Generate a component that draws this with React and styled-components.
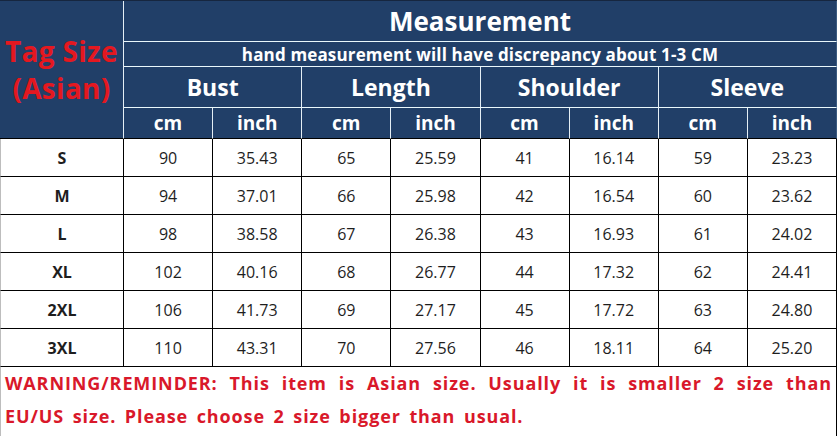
import React from "react";
import styled, { createGlobalStyle } from "styled-components";

const Global = createGlobalStyle`
  * { box-sizing: border-box; }
  html, body { margin: 0; padding: 0; background: #ffffff; }
  body { font-family: "Open Sans", "Noto Sans", "Liberation Sans", sans-serif; }
`;

const NAVY = "#213f68";
const RED = "#d9182a";

const Sheet = styled.div`
  width: 837px;
  height: 436px;
  display: grid;
  grid-template-columns: 124px repeat(8, 1fr);
  grid-template-rows: 41px 25px 41px 31px repeat(6, 38px) 70px;
  border-top: 1px solid #16263f;
`;

const Head = styled.div`
  background: ${NAVY};
  color: #ffffff;
  display: flex;
  align-items: center;
  justify-content: center;
  font-weight: ${(p) => p.$weight || 700};
  font-size: ${(p) => p.$size || 20}px;
  border-right: 1px solid ${(p) => (p.$last ? "#3a5a80" : "#e4eef5")};
  border-bottom: 1px solid ${(p) => (p.$bottom ? "#000" : "#eaf8fc")};
  grid-column: ${(p) => p.$col || "auto"};
  grid-row: ${(p) => p.$row || "auto"};
  white-space: nowrap;
  letter-spacing: ${(p) => p.$ls || 0}px;
  line-height: 1;
`;

const TagCell = styled(Head)`
  flex-direction: column;
  color: #e41820;
  font-size: 28px;
  line-height: 37px;
  padding-top: 0;
  letter-spacing: 0.3px;
`;

const Cell = styled.div`
  display: flex;
  align-items: center;
  justify-content: center;
  font-size: 16px;
  font-weight: ${(p) => (p.$bold ? 700 : 400)};
  color: #1e1e1e;
  border-right: 1px solid #000;
  border-bottom: 1px solid #000;
  border-left: ${(p) => (p.$first ? "1px solid #bdbdbd" : "none")};
  padding-top: 1px;
`;

const Warning = styled.div`
  grid-column: 1 / -1;
  border-right: 1px solid #000;
  border-bottom: 1px solid #000;
  border-left: 1px solid #bdbdbd;
  color: ${RED};
  font-weight: 700;
  font-size: 18px;
  letter-spacing: 0.9px;
  word-spacing: 3px;
  line-height: 33px;
  padding: 0 4px 0 4px;
  text-align: justify;
  text-align-last: left;
`;

const rows = [
  ["S", 90, "35.43", 65, "25.59", 41, "16.14", 59, "23.23"],
  ["M", 94, "37.01", 66, "25.98", 42, "16.54", 60, "23.62"],
  ["L", 98, "38.58", 67, "26.38", 43, "16.93", 61, "24.02"],
  ["XL", 102, "40.16", 68, "26.77", 44, "17.32", 62, "24.41"],
  ["2XL", 106, "41.73", 69, "27.17", 45, "17.72", 63, "24.80"],
  ["3XL", 110, "43.31", 70, "27.56", 46, "18.11", 64, "25.20"],
];

const groups = ["Bust", "Length", "Shoulder", "Sleeve"];

export default function App() {
  return (
    <>
      <Global />
      <Sheet>
        <TagCell $row="1 / span 4" $col="1" $bottom>
          <span>Tag Size</span>
          <span>(Asian)</span>
        </TagCell>
        <Head $col="2 / -1" $size={26} $last>
          Measurement
        </Head>
        <Head $col="2 / -1" $size={17} $weight={700} $ls={0.15} $last>
          hand measurement will have discrepancy about 1-3 CM
        </Head>
        {groups.map((g, i) => (
          <Head key={g} $col="span 2" $size={23} $last={i === 3}>
            {g}
          </Head>
        ))}
        {groups.map((g, i) => (
          <React.Fragment key={g + "u"}>
            <Head $size={19} $bottom>cm</Head>
            <Head $size={19} $bottom $last={i === 3}>inch</Head>
          </React.Fragment>
        ))}
        {rows.map((r) =>
          r.map((v, j) => (
            <Cell key={r[0] + j} $bold={j === 0} $first={j === 0}>
              {v}
            </Cell>
          ))
        )}
        <Warning>
          WARNING/REMINDER: This item is Asian size. Usually it is smaller 2 size than EU/US size. Please choose 2 size bigger than usual.
        </Warning>
      </Sheet>
    </>
  );
}
